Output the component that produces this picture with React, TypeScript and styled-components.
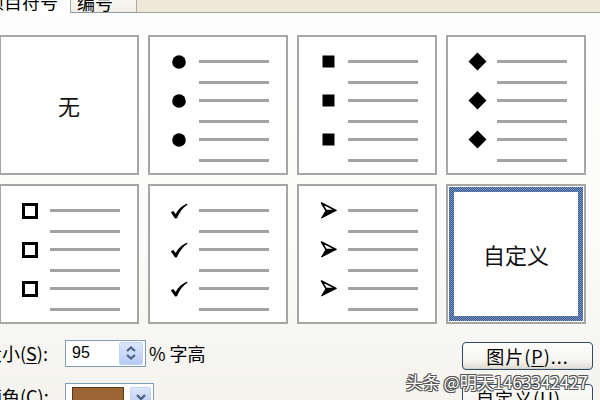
import { FC } from "react";
import styled, { createGlobalStyle } from "styled-components";

const GlobalStyle = createGlobalStyle`
  html, body {
    margin: 0;
    padding: 0;
    background: #fcfcfb;
  }
  body {
    font-family: "Noto Sans CJK SC", "Liberation Sans", sans-serif;
    color: #000;
  }
`;

type BulletKind = "dot" | "square" | "diamond" | "hollow" | "check" | "arrow";

const Dot = () => (
  <svg width="14" height="14" viewBox="0 0 14 14">
    <circle cx="7" cy="7" r="6.8" fill="#000" />
  </svg>
);

const Square = () => (
  <svg width="13" height="13" viewBox="0 0 13 13">
    <rect x="0.5" y="0.5" width="12" height="12" fill="#000" />
  </svg>
);

const Diamond = () => (
  <svg width="19" height="19" viewBox="0 0 19 19">
    <polygon points="9.5,0.5 18.5,9.5 9.5,18.5 0.5,9.5" fill="#000" />
  </svg>
);

const Hollow = () => (
  <svg width="16" height="16" viewBox="0 0 16 16">
    <rect x="1.5" y="1.5" width="13" height="13" fill="#fff" stroke="#000" strokeWidth="3" />
  </svg>
);

const Check = () => (
  <svg width="18" height="16" viewBox="0 0 18 16">
    <path
      d="M0.8 9.3 L3.4 8 L5.6 11 C8 6.5 12 2.8 17 0.6 L17.4 1.8 C12.8 4.8 9.4 9.2 7 15.2 L5 15.4 Z"
      fill="#000"
    />
  </svg>
);

const Arrow = () => (
  <svg width="17" height="17" viewBox="0 0 17 17">
    <path d="M1.5 1 L16 8.5 L6 8.5 Z" fill="#fff" stroke="#000" strokeWidth="1.5" strokeLinejoin="round" />
    <path d="M6 8.5 L16 8.5 L1.5 16 Z" fill="#000" stroke="#000" strokeWidth="1" strokeLinejoin="round" />
  </svg>
);

const bullets: Record<BulletKind, FC> = {
  dot: Dot,
  square: Square,
  diamond: Diamond,
  hollow: Hollow,
  check: Check,
  arrow: Arrow,
};

const ChevronUpDown = () => (
  <svg width="12" height="16" viewBox="0 0 12 16">
    <path d="M2 6 L6 2.5 L10 6" fill="none" stroke="#4d6185" strokeWidth="2.2" />
    <path d="M2 10 L6 13.5 L10 10" fill="none" stroke="#4d6185" strokeWidth="2.2" />
  </svg>
);

const ChevronDown = () => (
  <svg width="12" height="10" viewBox="0 0 12 10">
    <path d="M2 3 L6 7 L10 3" fill="none" stroke="#4d6185" strokeWidth="2.4" />
  </svg>
);

const kinds: (BulletKind | "none" | "custom")[] = [
  "none",
  "dot",
  "square",
  "diamond",
  "hollow",
  "check",
  "arrow",
  "custom",
];

const App = () => {
  return (
    <Frame>
      <GlobalStyle />
      <Dialog>
        <TabStrip>
          <Tab active>项目符号</Tab>
          <Tab>编号</Tab>
          <TabFill />
        </TabStrip>

        <Grid>
          {kinds.map((kind) => {
            if (kind === "none") {
              return (
                <Card key={kind}>
                  <CardText>无</CardText>
                </Card>
              );
            }
            if (kind === "custom") {
              return (
                <Card key={kind}>
                  <SelectedRing>
                    <CardText>自定义</CardText>
                  </SelectedRing>
                </Card>
              );
            }
            const Glyph = bullets[kind];
            return (
              <Card key={kind}>
                <ItemList>
                  {[0, 1, 2].map((i) => (
                    <Item key={i}>
                      <BulletSlot>
                        <Glyph />
                      </BulletSlot>
                      <Lines>
                        <Line />
                        <Line />
                      </Lines>
                    </Item>
                  ))}
                </ItemList>
              </Card>
            );
          })}
        </Grid>

        <Bottom>
          <Fields>
            <Field>
              <Label>
                大小(<u>S</u>):
              </Label>
              <Spin>
                <SpinValue>95</SpinValue>
                <SpinButton>
                  <ChevronUpDown />
                </SpinButton>
              </Spin>
              <Unit>% 字高</Unit>
            </Field>
            <Field>
              <Label>
                颜色(<u>C</u>):
              </Label>
              <ColorPick>
                <Swatch />
                <DropButton>
                  <ChevronDown />
                </DropButton>
              </ColorPick>
            </Field>
          </Fields>
          <Buttons>
            <XpButton>
              图片(<u>P</u>)...
            </XpButton>
            <XpButton>
              自定义(<u>U</u>)...
            </XpButton>
          </Buttons>
        </Bottom>
      </Dialog>
      <Watermark>头条 @明天1463342427</Watermark>
    </Frame>
  );
};

const Frame = styled.div`
  position: relative;
  width: 600px;
  height: 400px;
  overflow: hidden;
  background: linear-gradient(#fefefe, #fbfbf9 60%, #f4f3ee);
`;

const Dialog = styled.div`
  width: 620px;
  margin: -9px 0 0 -20px;
`;

const TabStrip = styled.div`
  display: flex;
  height: 22px;
`;

const Tab = styled.div<{ active?: boolean }>`
  box-sizing: border-box;
  height: 22px;
  font-size: 18px;
  line-height: 21px;
  white-space: nowrap;
  padding-left: 6px;
  ${(p) =>
    p.active
      ? `
    width: 90px;
    background: #fff;
  `
      : `
    width: 67px;
    background: linear-gradient(#fdfdfc, #f0eee6);
    border: 1px solid #a9a99f;
    border-bottom-color: #919b9c;
  `}
`;

const TabFill = styled.div`
  flex: 1;
  box-sizing: border-box;
  background: #ece9d8;
  border-bottom: 1px solid #a2a39c;
`;

const Grid = styled.div`
  display: grid;
  grid-template-columns: repeat(4, 140px);
  grid-auto-rows: 140px;
  gap: 9px;
  margin: 22px 0 0 19px;
`;

const Card = styled.div`
  box-sizing: border-box;
  display: flex;
  flex-direction: column;
  background: #fff;
  border: 2px solid #a6a6a6;
`;

const CardText = styled.div`
  flex: 1;
  display: flex;
  align-items: center;
  justify-content: center;
  font-size: 22px;
  color: #111;
`;

const SelectedRing = styled.div`
  flex: 1;
  display: flex;
  margin: 1px;
  border: 5px solid transparent;
  background: linear-gradient(#fff, #fff) padding-box,
    repeating-conic-gradient(#34558c 0 25%, #7f99c4 0 50%) 0 0 / 2px 2px border-box;
`;

const ItemList = styled.div`
  display: flex;
  flex-direction: column;
  gap: 15px;
  padding: 23px 0 0 20px;
`;

const Item = styled.div`
  display: flex;
  align-items: flex-start;
  gap: 11px;
`;

const BulletSlot = styled.div`
  width: 18px;
  height: 3px;
  display: flex;
  align-items: center;
  justify-content: center;
  overflow: visible;

  svg {
    flex-shrink: 0;
  }
`;

const Lines = styled.div`
  display: flex;
  flex-direction: column;
  gap: 18px;
`;

const Line = styled.div`
  width: 70px;
  height: 3px;
  background: #a3a3a3;
`;

const Bottom = styled.div`
  display: flex;
  justify-content: space-between;
  margin-top: 16px;
  padding: 0 7px 0 4px;
`;

const Fields = styled.div`
  display: flex;
  flex-direction: column;
  gap: 17px;
`;

const Field = styled.div`
  display: flex;
  align-items: center;
  height: 26px;
`;

const Label = styled.div`
  width: 81px;
  font-size: 18px;
  white-space: nowrap;

  u {
    text-underline-offset: 2px;
  }
`;

const Spin = styled.div`
  box-sizing: border-box;
  display: flex;
  align-items: center;
  justify-content: space-between;
  width: 81px;
  height: 27px;
  padding: 2px;
  background: #fff;
  border: 1px solid #7f9db9;
`;

const SpinValue = styled.span`
  padding-left: 4px;
  font-family: "Liberation Sans", sans-serif;
  font-size: 16px;
`;

const SpinButton = styled.div`
  width: 22px;
  height: 21px;
  display: flex;
  align-items: center;
  justify-content: center;
  border-radius: 2px;
  background: linear-gradient(#dbe6fb, #b7cbf3);
  border: 1px solid #c3d3f5;
`;

const Unit = styled.span`
  margin-left: 3px;
  font-size: 18px;
  white-space: nowrap;
`;

const ColorPick = styled.div`
  box-sizing: border-box;
  display: flex;
  align-items: stretch;
  gap: 6px;
  width: 89px;
  height: 27px;
  padding: 3px 2px 2px 6px;
  background: #fff;
  border: 1px solid #7f9db9;
`;

const Swatch = styled.div`
  width: 50px;
  border: 1px solid #5a3a1c;
  background: #9a6434;
`;

const DropButton = styled.div`
  flex: 1;
  display: flex;
  align-items: center;
  justify-content: center;
  border-radius: 2px;
  background: linear-gradient(#dbe6fb, #b7cbf3);
  border: 1px solid #c3d3f5;
`;

const Buttons = styled.div`
  display: flex;
  flex-direction: column;
  gap: 14px;
  margin-top: 2px;
`;

const XpButton = styled.div`
  box-sizing: border-box;
  width: 131px;
  height: 28px;
  display: flex;
  align-items: center;
  justify-content: center;
  font-size: 18px;
  letter-spacing: 1px;
  border: 1px solid #2b4a6e;
  border-radius: 4px;
  background: linear-gradient(#fefefe, #f4f3ee 70%, #dedbd0);
  box-shadow: inset 0 -1px 0 #d6d0c5;

  u {
    text-underline-offset: 2px;
  }
`;

const Watermark = styled.div`
  position: absolute;
  top: 369px;
  right: 12px;
  font-size: 17px;
  color: #fff;
  white-space: nowrap;
  text-shadow: -1px -1px 0 #555, 1px -1px 0 #555, -1px 1px 0 #555, 1px 1px 0 #555,
    0 1px 0 #555, 0 -1px 0 #555;
`;

export default App;
